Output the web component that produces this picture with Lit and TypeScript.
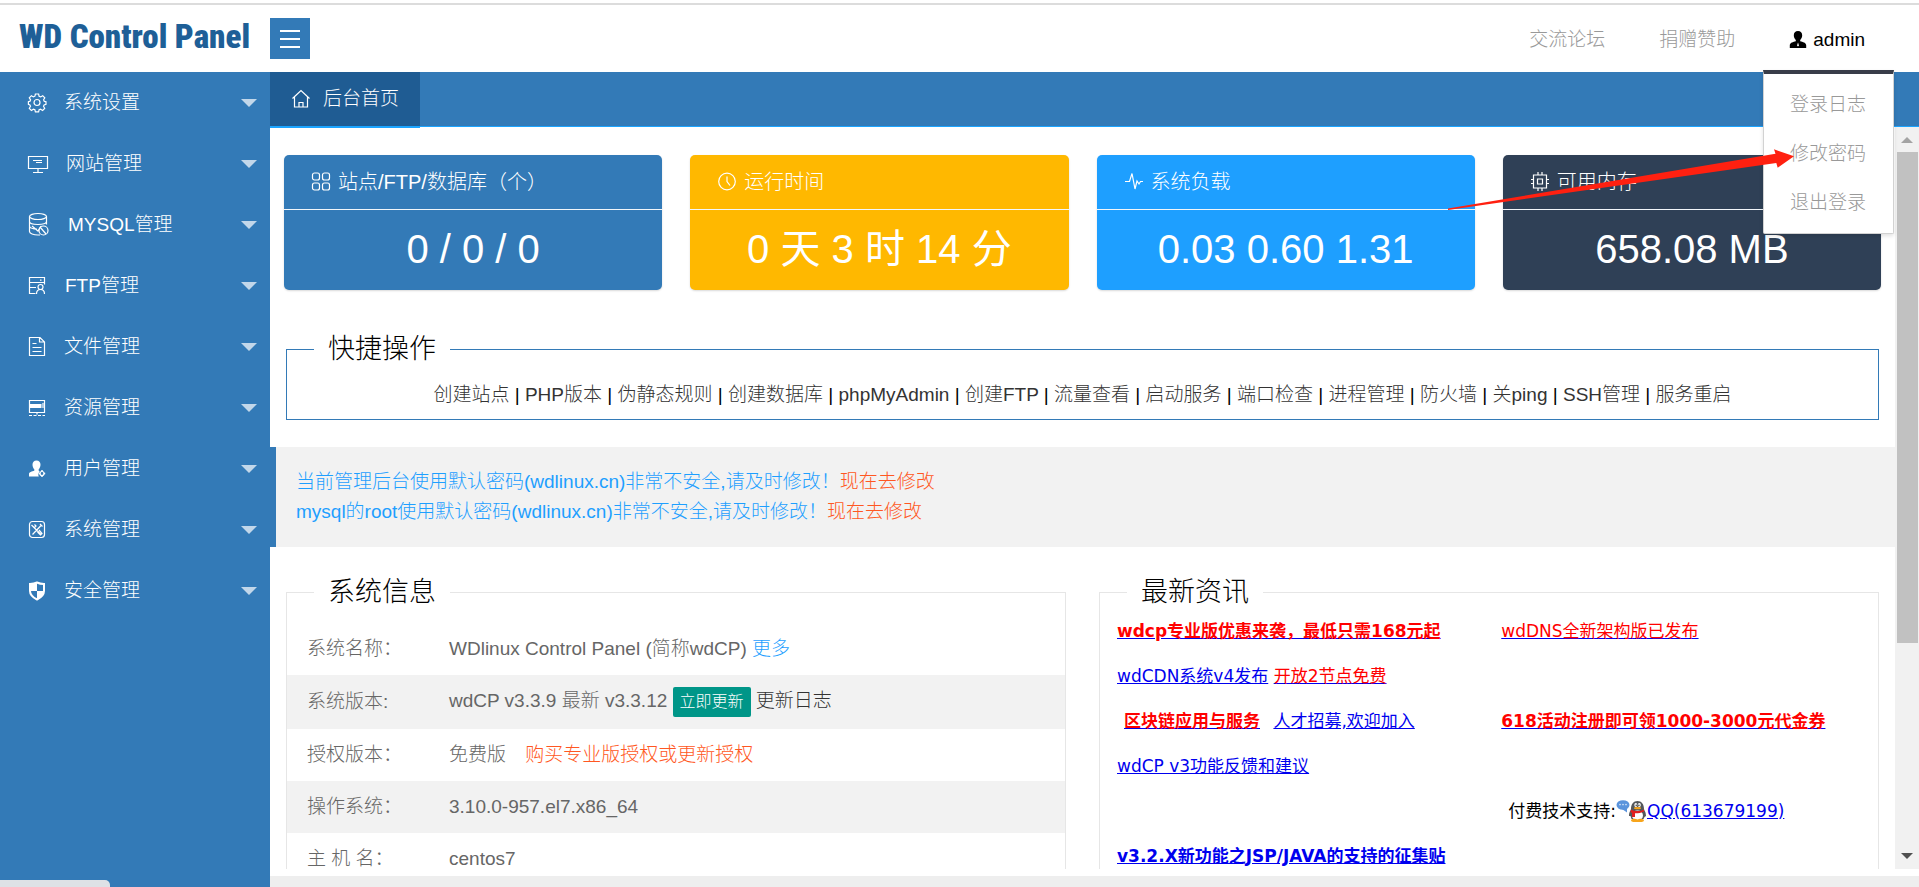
import { LitElement, html, css, svg } from "lit";
import { customElement } from "lit/decorators.js";

const glyphs: Record<string, { w: number; art: unknown }> = {
  gear: {
    w: 18,
    art: svg`<path d="M7.4 1h3.2l.5 2.2 1.6.7 2-1.2 2.1 2.2-1.2 1.9.6 1.5 1.8.5v2.6l-1.9.5-.6 1.4 1.2 2-2.1 2.1-2-1.2-1.5.6-.5 2H7.4l-.5-2-1.5-.6-2 1.2-2.1-2.1 1.2-2-.6-1.4L.4 11.4V8.8l1.6-.5.6-1.500-1.300-1.900 2.100-2.200 2 1.200 1.500-.700z"/><circle cx="9" cy="9.5" r="3"/>`,
  },
  screen: {
    w: 20,
    art: svg`<path d="M.500 2.500h19v12H.500zM5 6.500h9M8 8.500h6M10 14.500v4M5 18.500h10"/>`,
  },
  database: {
    w: 22,
    art: svg`<ellipse cx="10" cy="1.500" rx="8.500" ry="3"/><path d="M1.500 1.500v15c0 2 4 3.500 8.500 3.500h2M18.500 1.500v8M1.500 6.500c0 2 4 3 8.500 3s8.500-1 8.500-3M1.500 11.500c1 2 4 2.500 7.500 2.500M4 11l6 5 3-5"/><circle cx="15.500" cy="15.500" r="4.500"/><path d="m12 12 6 7"/>`,
  },
  ftp: {
    w: 19,
    art: svg`<path d="M16.500 8.500v-7h-15v16h6M1.500 6.500h15M12 4.200h1.500M1.500 11.500H8"/><circle cx="12.500" cy="11" r="2.500"/><path d="M8.500 18c0-3 1.500-4.500 4-4.500s4 1.500 4 4.500"/>`,
  },
  file: {
    w: 18,
    art: svg`<path d="M1.500 .500H12l4.500 4.500v13.500h-15zM11.500.500V5h5M4.500 6.500h4M4.500 10.500h9M4.500 14.500h9"/>`,
  },
  server: {
    w: 18,
    art: svg`<path d="M1.500 2.500h15v12h-15zM9 14.500v2"/><path d="M1.500 6h12v4h-12z" fill="currentColor" stroke="none"/><path d="M15 5v5" /><path d="M1 17.500h16" stroke-dasharray="3 1.500"/>`,
  },
  userset: {
    w: 18,
    art: svg`<g fill="currentColor" stroke="none"><path d="M8.500 1.500c2.600 0 4 1.800 4 4.200 0 1.800-.8 3.500-1.800 4.500v1.600l1 .6a4.500 4.500 0 0 0-.9 5.100H1v-2.700c0-1.600 3-2.300 5.300-3v-1.600c-1-1-1.800-2.700-1.800-4.500 0-2.400 1.400-4.200 4-4.200z"/></g><circle cx="14" cy="14.500" r="2"/><path d="M14 11v1.500M14 16.500V18M10.800 14.500h1.500M15.700 14.500h1.500" stroke-width="1.500"/>`,
  },
  tools: {
    w: 18,
    art: svg`<rect x="1.500" y="1.500" width="15" height="16" rx="3"/><path d="m4.500 14.500 9-9.500M12 4l2.500 2.500M5 6.500l8 8M3.500 5l3 3M6.500 4.500 8 6l-2 2M11 10l3 3.500-1.500 1.500L9.500 12"/>`,
  },
  shield: {
    w: 18,
    art: svg`<path d="M2 3c3 0 5-.5 7-1.500 2 1 4 1.500 7 1.500v7c0 4-3 6.500-7 8.500-4-2-7-4.500-7-8.500z" stroke-width="2"/><path d="M2 3c3 0 5-.5 7-1v8H2zM9 10h7c0 4-3 6-7 8z" fill="currentColor" stroke="none"/>`,
  },
  home: {
    w: 18,
    art: svg`<path d="M.5 9.500 9 1.500l8.500 8M2.500 8v10h13V8M7 18v-4.500h4V18"/>`,
  },
  grid: {
    w: 18,
    art: svg`<rect x=".500" y="1" width="7" height="7" rx="2"/><rect x="10.500" y="1" width="7" height="7" rx="2"/><rect x=".500" y="11" width="7" height="7" rx="2"/><rect x="10.500" y="11" width="7" height="7" rx="2"/>`,
  },
  clock: {
    w: 18,
    art: svg`<circle cx="9" cy="9.500" r="8.300"/><path d="M9 4.500v5l3 4"/>`,
  },
  pulse: {
    w: 18,
    art: svg`<path d="M0 9.500h4.500L7 1.500l3 15.500 2-8 2 3 1.500-2.500H18"/>`,
  },
  chip: {
    w: 18,
    art: svg`<path d="M2.500 3h13v13h-13zM6.500 7h5v5h-5zM7 0v3M11 0v3M7 16v3M11 16v3M0 7.500h2.500M0 11.500h2.500M15.500 7.500H18M15.500 11.500H18"/>`,
  },
  person: {
    w: 18,
    art: svg`<path d="M9 1c2.700 0 4.200 1.800 4.200 4.300 0 2-.9 3.700-2 4.700v1.300c2.500.8 6 1.500 6 4V18H.8v-2.700c0-2.500 3.500-3.200 6-4V10c-1.100-1-2-2.700-2-4.700C4.800 2.800 6.300 1 9 1z" fill="currentColor" stroke="none"/><path d="m9 12.500-1 3 1 1 1-1z" fill="#fff" stroke="none"/>`,
  },
};

const icon = (name: string) => {
  const g = glyphs[name];
  return html`<svg class="icon" width=${g.w} height="20" viewBox="0 0 ${g.w} 20" aria-hidden="true">${g.art}</svg>`;
};

const menu = [
  ["gear", "系统设置"],
  ["screen", "网站管理"],
  ["database", "MYSQL管理"],
  ["ftp", "FTP管理"],
  ["file", "文件管理"],
  ["server", "资源管理"],
  ["userset", "用户管理"],
  ["tools", "系统管理"],
  ["shield", "安全管理"],
];

const cards = [
  ["blue", "grid", "站点/FTP/数据库（个）", "0 / 0 / 0"],
  ["amber", "clock", "运行时间", "0 天 3 时 14 分"],
  ["sky", "pulse", "系统负载", "0.03 0.60 1.31"],
  ["navy", "chip", "可用内存", "658.08 MB"],
];

const actions = [
  "创建站点", "PHP版本", "伪静态规则", "创建数据库", "phpMyAdmin", "创建FTP", "流量查看",
  "启动服务", "端口检查", "进程管理", "防火墙", "关ping", "SSH管理", "服务重启",
];

@customElement("app-root")
export class AppRoot extends LitElement {
  static styles = css`
    :host {
      display: block;
      font-family: "Liberation Sans", "Noto Sans CJK SC", sans-serif;
      font-size: 19px;
      font-weight: 300;
      line-height: 24px;
      color: #000;
    }
    * { box-sizing: border-box; }
    a { color: inherit; text-decoration: none; }
    button { font: inherit; border: 0; cursor: pointer; }
    .icon { display: block; flex: none; fill: none; stroke: currentColor; stroke-width: 1.2; overflow: visible; }
    .page {
      position: relative;
      display: grid;
      grid-template-columns: 270px minmax(0, 1fr);
      grid-template-rows: 72px minmax(0, 1fr);
      height: 100vh;
      overflow: hidden;
      background: #fff;
    }
    .header {
      grid-column: 1 / -1;
      display: flex;
      align-items: stretch;
      margin-top: 3px;
      border-top: 2px solid #dcdcdc;
    }
    .brand {
      width: 270px;
      padding: 14px 0 0 19px;
      font-family: Impact, "Roboto Condensed", Roboto, sans-serif;
      font-size: 33px;
      font-weight: 900;
      line-height: 36px;
      color: #1e5f97;
      white-space: nowrap;
    }
    .toggle {
      display: grid;
      place-content: center;
      gap: 6px;
      width: 40px;
      height: 41px;
      margin-top: 13px;
      padding: 0;
      background: #337ab7;
    }
    .toggle span { width: 20px; height: 2px; background: #fff; }
    .links { display: flex; align-items: center; margin-left: auto; padding: 3px 27px 0 0; color: #999; }
    .links a { padding: 0 27px; }
    .links .user { display: flex; align-items: center; gap: 6px; color: #000; }
    .dropdown {
      position: absolute;
      z-index: 2;
      top: 70px;
      right: 25px;
      width: 131px;
      padding: 6px 0;
      background: #fff;
      border: 1px solid #d2d2d2;
      border-top: 4px solid #393d49;
      border-radius: 0 0 2px 2px;
      box-shadow: 0 2px 4px rgba(0, 0, 0, 0.12);
      color: #999;
    }
    .dropdown a { display: block; padding-left: 26px; line-height: 49px; }
    .sidebar { background: #337ab7; color: #fff; }
    .sidebar a { display: flex; align-items: center; gap: 18px; height: 61px; padding: 0 13px 0 28px; }
    .caret {
      margin-left: auto;
      border: 8px solid transparent;
      border-top-color: rgba(255, 255, 255, 0.7);
      border-bottom: 0;
    }
    .main { display: flex; flex-direction: column; min-width: 0; }
    .tabs { display: flex; flex: none; height: 55px; background: #337ab7; border-bottom: 1px solid #1ba4ff; color: #fff; }
    .tab {
      position: relative;
      display: flex;
      align-items: center;
      gap: 13px;
      height: 54px;
      padding: 0 21px 0 22px;
      background: #1f5c93;
    }
    .tab::after { content: ""; position: absolute; left: 0; right: 0; top: 100%; height: 2px; background: #1ba4ff; }
    .viewport { display: flex; flex: 1; min-height: 0; }
    .content { flex: 1; min-width: 0; overflow: hidden; padding-top: 28px; }
    .foot { flex: none; height: 18px; border-top: 7px solid #fff; background: #eee; }
    .scrollbar { display: flex; flex-direction: column; align-items: center; width: 24px; padding: 10px 0; background: #f1f1f1; }
    .up, .down { border: 6px solid transparent; }
    .up { border-top: 0; border-bottom-color: #a3a3a3; margin-bottom: 9px; }
    .down { border-bottom: 0; border-top-color: #505050; margin-top: auto; }
    .thumb { width: 21px; height: 68%; background: #c1c1c1; }
    .cards { display: grid; grid-template-columns: repeat(4, minmax(0, 1fr)); gap: 28px; padding: 0 14px; }
    .card { border-radius: 5px; color: #fff; box-shadow: 0 1px 2px rgba(0, 0, 0, 0.15); }
    .blue { background: #337ab7; }
    .amber { background: #ffb800; }
    .sky { background: #1e9fff; }
    .navy { background: #2f4056; }
    .card-head { display: flex; align-items: center; gap: 8px; height: 55px; padding: 0 28px; border-bottom: 1px solid #f2f6fa; font-size: 20px; }
    .card-value { height: 80px; font-size: 40px; font-weight: 400; line-height: 78px; text-align: center; }
    fieldset { min-width: 0; margin: 0; padding: 0; border: 1px solid #e6e6e6; }
    legend { margin-left: 27px; padding: 0 14px; font-size: 27px; line-height: 30px; }
    .quick { margin: 44px 16px 27px; border-color: #337ab7; }
    .actions { padding: 19px 12px 12px; text-align: center; }
    .actions a { color: #333; }
    .notice { padding: 20px; background: #f2f2f2; border-left: 6px solid #337ab7; line-height: 30px; color: #1e9fff; }
    .notice p { margin: 0; }
    .warn { color: #ff5722; }
    .panels { display: grid; grid-template-columns: minmax(0, 1fr) minmax(0, 1fr); gap: 33px; padding: 30px 16px 0; }
    .info { width: 100%; margin-top: 16px; border-collapse: collapse; color: #666; }
    .info tr:nth-child(even) { background: #f2f2f2; }
    .info th, .info td { height: 52px; padding: 0 0 0 20px; font-weight: 300; text-align: left; }
    .info th { width: 142px; }
    .info .tall td { height: 54px; }
    .more { color: #1e9fff; }
    .dark { color: #333; }
    .update { height: 30px; padding: 0 7px; border-radius: 2px; background: #009688; color: #fff; font-size: 16px; vertical-align: middle; }
    .buy { margin-left: 14px; }
    .news {
      display: grid;
      grid-template-columns: 102fr 100fr;
      grid-auto-rows: 45px;
      align-items: center;
      padding: 1px 0 0 17px;
      font-family: "DejaVu Sans", "Noto Sans CJK SC", sans-serif;
      font-size: 17px;
      font-weight: 400;
      white-space: nowrap;
    }
    .news a { color: #00e; text-decoration: underline; }
    .news b { font-weight: 700; }
    .news .red { color: #f00; }
    .indent { padding-left: 7px; }
    .gap { margin-left: 8px; }
    .support { display: flex; align-items: center; }
    .status { position: absolute; left: 0; bottom: 0; width: 110px; height: 7px; border-radius: 0 5px 0 0; background: #dee1e6; }
    .pointer { position: absolute; z-index: 3; top: 148px; right: 125px; }
  `;

  render() {
    return html`
      <div class="page">
        <header class="header">
          <div class="brand">WD Control Panel</div>
          <button class="toggle" aria-label="菜单"><span></span><span></span><span></span></button>
          <nav class="links">
            <a href="#">交流论坛</a>
            <a href="#">捐赠赞助</a>
            <a href="#" class="user">${icon("person")}admin</a>
          </nav>
        </header>

        <nav class="sidebar">
          ${menu.map(([i, t]) => html`<a href="#">${icon(i)}<span>${t}</span><span class="caret"></span></a>`)}
        </nav>

        <main class="main">
          <div class="tabs"><a href="#" class="tab">${icon("home")}<span>后台首页</span></a></div>
          <div class="viewport">
            <div class="content">
              <section class="cards">
                ${cards.map(
                  ([tone, i, title, value]) => html`<article class="card ${tone}">
                    <div class="card-head">${icon(i)}<span>${title}</span></div>
                    <div class="card-value">${value}</div>
                  </article>`
                )}
              </section>

              <fieldset class="quick">
                <legend>快捷操作</legend>
                <div class="actions">${actions.map((a, n) => html`${n ? " | " : ""}<a href="#">${a}</a>`)}</div>
              </fieldset>

              <div class="notice">
                <p>当前管理后台使用默认密码(wdlinux.cn)非常不安全,请及时修改！<a href="#" class="warn">现在去修改</a></p>
                <p>mysql的root使用默认密码(wdlinux.cn)非常不安全,请及时修改！<a href="#" class="warn">现在去修改</a></p>
              </div>

              <div class="panels">
                <fieldset>
                  <legend>系统信息</legend>
                  <table class="info">
                    <tr><th>系统名称：</th><td>WDlinux Control Panel (简称wdCP) <a href="#" class="more">更多</a></td></tr>
                    <tr class="tall"><th>系统版本:</th><td>wdCP v3.3.9 最新 v3.3.12 <button class="update">立即更新</button> <a href="#" class="dark">更新日志</a></td></tr>
                    <tr><th>授权版本：</th><td>免费版 <a href="#" class="warn buy">购买专业版授权或更新授权</a></td></tr>
                    <tr><th>操作系统：</th><td>3.10.0-957.el7.x86_64</td></tr>
                    <tr><th>主 机 名：</th><td>centos7</td></tr>
                  </table>
                </fieldset>
                <fieldset>
                  <legend>最新资讯</legend>
                  <div class="news">
                    <div><a href="#"><b class="red">wdcp专业版优惠来袭，最低只需168元起</b></a></div>
                    <div><a href="#"><span class="red">wdDNS全新架构版已发布</span></a></div>
                    <div><a href="#">wdCDN系统v4发布</a> <a href="#"><span class="red">开放2节点免费</span></a></div>
                    <div></div>
                    <div class="indent"><a href="#"><b class="red">区块链应用与服务</b></a> <a href="#" class="gap">人才招募,欢迎加入</a></div>
                    <div><a href="#"><b class="red">618活动注册即可领1000-3000元代金券</b></a></div>
                    <div><a href="#">wdCP v3功能反馈和建议</a></div>
                    <div></div>
                    <div></div>
                    <div class="support indent">付费技术支持:${this.penguin()}<a href="#">QQ(613679199)</a></div>
                    <div><a href="#"><b>v3.2.X新功能之JSP/JAVA的支持的征集贴</b></a></div>
                    <div></div>
                  </div>
                </fieldset>
              </div>
            </div>
            <div class="scrollbar" aria-hidden="true">
              <span class="up"></span><span class="thumb"></span><span class="down"></span>
            </div>
          </div>
          <div class="foot"></div>
        </main>

        <nav class="dropdown">
          <a href="#">登录日志</a>
          <a href="#">修改密码</a>
          <a href="#">退出登录</a>
        </nav>
        <svg class="pointer" width="346" height="63" viewBox="0 0 346 63" aria-hidden="true">
          <path d="M0 60.500 327.500 5.700 326 1.300 346 8.300 329.700 19.700 328.300 15 0 62z" fill="#ff2010" />
        </svg>
        <div class="status"></div>
      </div>
    `;
  }

  private penguin() {
    return html`<svg width="31" height="22" viewBox="0 0 31 22" aria-hidden="true">
      <ellipse cx="7" cy="5" rx="6.500" ry="4.800" fill="#5b94dc" />
      <path d="m6 9 5 3.500L11 8z" fill="#5b94dc" />
      <g fill="#dbe9fb"><circle cx="4" cy="4.600" r=".8" /><circle cx="7" cy="4.600" r=".8" /><circle cx="10" cy="4.600" r=".8" /></g>
      <path d="M13 16c0-4 1.500-5 2-7 0-5 2.500-8 6.500-8s6.500 3 6.500 8c.5 2 2 3 2 7l-1.500 1-1 2h-12l-1-3z" fill="#55585c" />
      <ellipse cx="21.500" cy="15.500" rx="5.500" ry="5" fill="#fff" />
      <ellipse cx="19.800" cy="5" rx="1.500" ry="2" fill="#fff" /><ellipse cx="23.300" cy="5" rx="1.500" ry="2" fill="#fff" />
      <circle cx="20.200" cy="5.200" r=".7" fill="#222" /><circle cx="22.900" cy="5.200" r=".7" fill="#222" />
      <ellipse cx="21.500" cy="8.200" rx="3.500" ry="1.100" fill="#f7a51c" />
      <path d="M15 9.500c4 2 9 2 13 0v2c-3 1.500-7 2-9 1.800V17h-3v-4l-1.500-1z" fill="#e02020" />
      <path d="M15 21c0-2 2-2.500 5-2l1.500.5 1.500-.5c3-.5 5 0 5 2l-2 1h-9z" fill="#f7a51c" />
    </svg>`;
  }
}
